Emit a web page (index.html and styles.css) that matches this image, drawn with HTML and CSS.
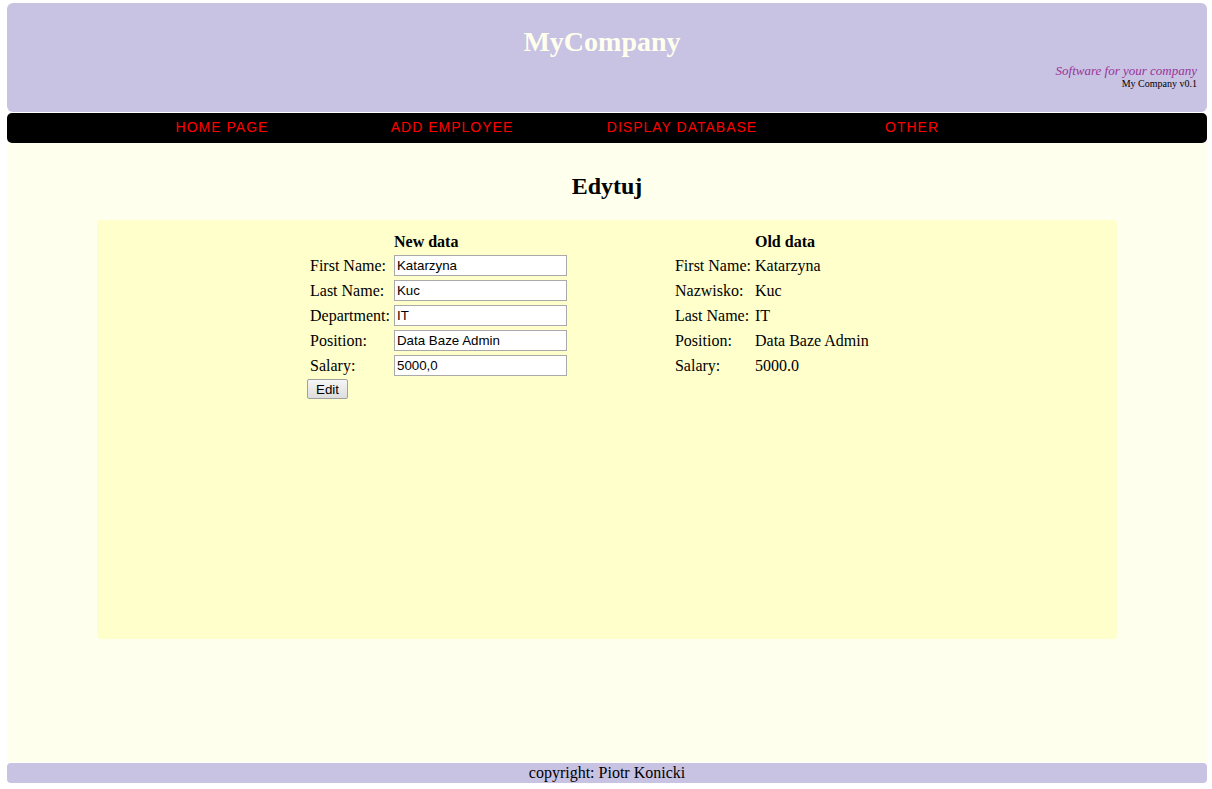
FILE: index.html
```html
<!DOCTYPE html>
<html>
<head>
<meta charset="utf-8">
<title>MyCompany</title>
<link rel="stylesheet" href="styles.css">
</head>
<body>
<div class="page">
  <header class="header">
    <h1 class="logo">MyCompany</h1>
    <div class="slogan">Software for your company</div>
    <div class="version">My Company v0.1</div>
  </header>
  <nav class="nav">
    <a class="nav-link" href="#">HOME PAGE</a>
    <a class="nav-link" href="#">ADD EMPLOYEE</a>
    <a class="nav-link" href="#">DISPLAY DATABASE</a>
    <a class="nav-link" href="#">OTHER</a>
  </nav>
  <main class="main">
    <h2 class="title">Edytuj</h2>
    <div class="box">
      <div class="form-col">
        <table class="data">
          <tr class="head-row"><td></td><th>New data</th></tr>
          <tr><td>First Name:</td><td><input class="field" type="text" value="Katarzyna"></td></tr>
          <tr><td>Last Name:</td><td><input class="field" type="text" value="Kuc"></td></tr>
          <tr><td>Department:</td><td><input class="field" type="text" value="IT"></td></tr>
          <tr><td>Position:</td><td><input class="field" type="text" value="Data Baze Admin"></td></tr>
          <tr><td>Salary:</td><td><input class="field" type="text" value="5000,0"></td></tr>
        </table>
        <button class="btn" type="button">Edit</button>
      </div>
      <table class="data old">
        <tr class="head-row"><td></td><th>Old data</th></tr>
        <tr class="val-row"><td>First Name:</td><td>Katarzyna</td></tr>
        <tr class="val-row"><td>Nazwisko:</td><td>Kuc</td></tr>
        <tr class="val-row"><td>Last Name:</td><td>IT</td></tr>
        <tr class="val-row"><td>Position:</td><td>Data Baze Admin</td></tr>
        <tr class="val-row"><td>Salary:</td><td>5000.0</td></tr>
      </table>
    </div>
  </main>
  <footer class="footer">copyright: Piotr Konicki</footer>
</div>
</body>
</html>
```

FILE: styles.css
```css
html, body {
  margin: 0;
  padding: 0;
  background: #ffffff;
}
body {
  font-family: "Liberation Serif", "Times New Roman", serif;
  font-size: 16px;
  color: #000;
}
.page {
  padding: 3px 5px 0 7px;
}
.header {
  background: #c8c2e3;
  border-radius: 6px;
  height: 109px;
  box-sizing: border-box;
  padding: 23px 10px 0 10px;
}
.logo {
  margin: 0 10px 0 0;
  text-align: center;
  font-size: 28px;
  line-height: 32px;
  font-weight: bold;
  color: #ffffee;
}
.slogan {
  margin-top: 5px;
  text-align: right;
  font-style: italic;
  font-size: 13px;
  line-height: 15px;
  color: #993399;
}
.version {
  text-align: right;
  font-size: 10px;
  line-height: 12px;
  color: #000;
}
.nav {
  margin-top: 1px;
  background: #000;
  border-radius: 5px;
  height: 30px;
  box-sizing: border-box;
  padding: 0 0 2px 100px;
  display: flex;
  align-items: center;
}
.nav-link {
  width: 230px;
  text-align: center;
  font-family: "Liberation Sans", Arial, sans-serif;
  font-size: 14px;
  letter-spacing: 1px;
  color: #ff0000;
  text-decoration: none;
}
.main {
  background: #ffffee;
  height: 619px;
  box-sizing: border-box;
  padding: 31px 90px 0 90px;
}
.title {
  margin: 0 0 22px 0;
  text-align: center;
  font-size: 24px;
  line-height: 24px;
  font-weight: bold;
}
.box {
  background: #ffffcc;
  border-radius: 4px;
  height: 419px;
  box-sizing: border-box;
  padding: 9px 0 0 210px;
  display: flex;
  align-items: flex-start;
}
.form-col {
  display: flex;
  flex-direction: column;
  align-items: flex-start;
}
.data {
  border-collapse: separate;
  border-spacing: 2px;
}
.data td, .data th {
  padding: 1px;
  text-align: left;
  white-space: nowrap;
  line-height: 18px;
}
.data th {
  font-weight: bold;
  line-height: 19px;
}
.old {
  margin-left: 102px;
}
.val-row td {
  height: 21px;
}
.field {
  width: 173px;
  height: 21px;
  box-sizing: border-box;
  margin: 0;
  border: 1px solid #a9a9a9;
  padding: 1px 2px;
  font-family: "Liberation Sans", Arial, sans-serif;
  font-size: 13.33px;
  background: #fff;
}
.btn {
  margin: 0;
  height: 20px;
  box-sizing: border-box;
  padding: 0 8px;
  font-family: "Liberation Sans", Arial, sans-serif;
  font-size: 13.33px;
  border: 1px solid #a0a0a0;
  border-radius: 2px;
  background: linear-gradient(#f6f6f6, #dddddd);
  color: #000;
}
.footer {
  margin-top: 1px;
  background: #c8c2e3;
  border-radius: 4px;
  height: 20px;
  line-height: 20px;
  text-align: center;
  font-size: 16px;
}
```
